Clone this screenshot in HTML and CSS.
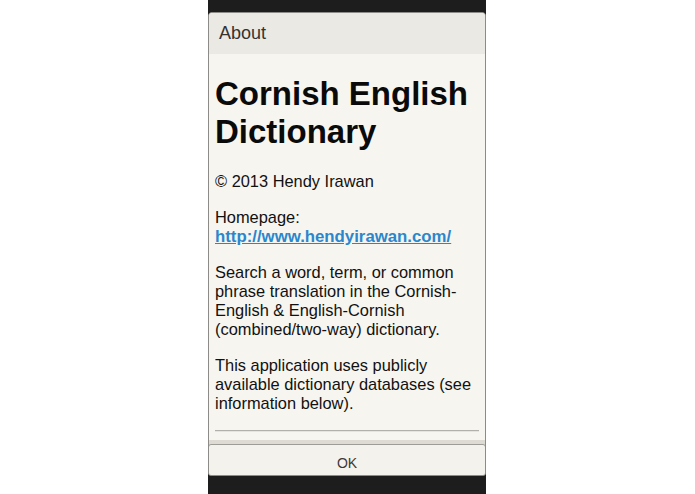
FILE: index.html
```html
<!DOCTYPE html>
<html>
<head>
<meta charset="utf-8">
<link rel="stylesheet" href="styles.css">
</head>
<body>
<div class="phone">
  <div class="status"></div>
  <div class="dialog">
    <div class="title">About</div>
    <div class="content">
      <h1 class="heading">Cornish English Dictionary</h1>
      <p class="para">© 2013 Hendy Irawan</p>
      <p class="para">Homepage:<br><a class="link" href="#">http://www.hendyirawan.com/</a></p>
      <p class="para">Search a word, term, or common phrase translation in the Cornish-English &amp; English-Cornish (combined/two-way) dictionary.</p>
      <p class="para">This application uses publicly available dictionary databases (see information below).</p>
      <hr class="sep">
    </div>
    <div class="buttons">
      <div class="btn">OK</div>
    </div>
  </div>
  <div class="bottom"></div>
</div>
</body>
</html>
```
FILE: styles.css
```css
html, body {
  margin: 0;
  padding: 0;
  background: #ffffff;
  height: 100%;
}
body {
  display: flex;
  justify-content: center;
  font-family: "Liberation Sans", Arial, sans-serif;
}
.phone {
  width: 278px;
  height: 494px;
  margin-left: -1px;
  background: #1d1d1d;
  display: flex;
  flex-direction: column;
}
.status {
  height: 12px;
  flex: none;
}
.dialog {
  flex: 1;
  display: flex;
  flex-direction: column;
  min-height: 0;
  border: 1px solid #8c8b87;
  border-radius: 4px 4px 3px 3px;
  background: #f7f5f0;
  overflow: hidden;
}
.title {
  height: 41px;
  flex: none;
  background: #ebe9e3;
  color: #333333;
  font-size: 18px;
  line-height: 40px;
  padding-left: 10px;
}
.content {
  flex: 1;
  min-height: 0;
  overflow: hidden;
  padding: 0 6px;
  color: #111111;
}
.heading {
  font-size: 33px;
  line-height: 38px;
  font-weight: bold;
  margin: 21px 0 21px;
  color: #0a0a0a;
}
.para {
  font-size: 16.4px;
  line-height: 19px;
  margin: 17px 0;
}
.link {
  color: #2b87cc;
  font-weight: bold;
  font-size: 16.8px;
  text-decoration: underline;
}
.sep {
  border: 0;
  border-top: 1px solid #b2b0aa;
  border-bottom: 1px solid #e6e4de;
  margin: 16px 0 0;
  height: 0;
}
.buttons {
  flex: none;
  background: #dedbd4;
  padding-top: 4px;
}
.btn {
  height: 30px;
  margin: 0 -1px -1px;
  border: 1px solid #9e9c97;
  border-radius: 3px;
  background: #f4f2ed;
  color: #3a3a3a;
  font-size: 14px;
  line-height: 36px;
  text-align: center;
}
.bottom {
  height: 18px;
  flex: none;
}
```
